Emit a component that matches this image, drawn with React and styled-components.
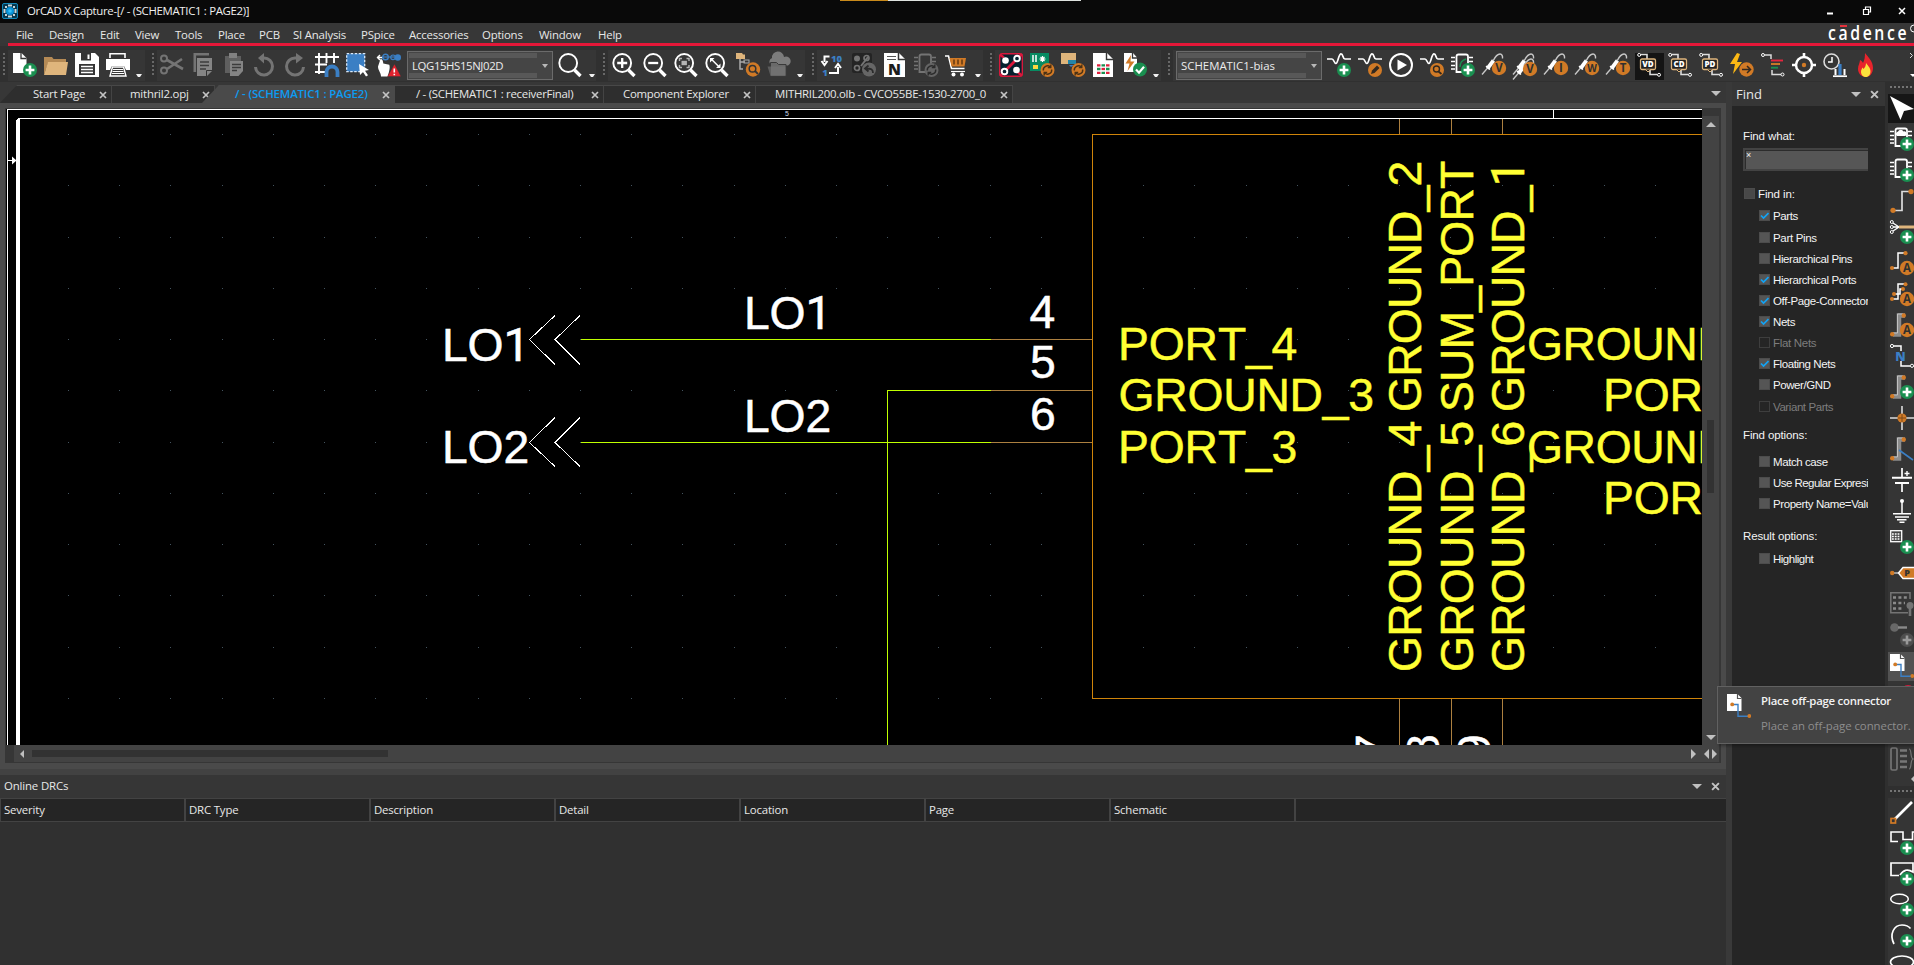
import React from "react";
import styled, { createGlobalStyle, css } from "styled-components";

const UI = '"Open Sans", "Noto Sans", sans-serif';

const Global = createGlobalStyle`
  * { box-sizing: border-box; }
  html, body { margin: 0; padding: 0; background: #252525; overflow: hidden; }
  body { font-family: ${UI}; font-size: 11.4px; color: #e8e8e8; }
  svg { display: block; flex: none; }
`;

const O = "#d17a26";
const G = "#1a8f50";
const B = "#3b7fc4";
const W = "#ffffff";
const D = "#747474";
const T = "#dfb57c";

/* ---------- icon pieces ---------- */
const Plus = ({ c = G, p = W }) => (
  <g>
    <circle cx="17" cy="17" r="7" fill={c} />
    <path d="M17 12.6v8.8M12.6 17h8.8" stroke={p} strokeWidth="2.6" />
  </g>
);
const Letter = ({ l, cx = 17, cy = 15, r = 7.2, s = 11.5 }) => (
  <g>
    <circle cx={cx} cy={cy} r={r} fill={O} />
    <text x={cx} y={cy + s * 0.36} fontSize={s} fontWeight="700" fontFamily="Open Sans, sans-serif" textAnchor="middle" fill="#30302e">{l}</text>
  </g>
);
const Probe = () => (
  <g fill="none" stroke={W}>
    <path d="M0 21.5L6 14.500" stroke="#c8c8c8" strokeWidth="1.3" />
    <path d="M5.5 15.500L11.500 7.500" strokeWidth="3.8" />
    <path d="M4 13l4 3.600" strokeWidth="1.4" />
    <path d="M11 8c2-4 4.500-7 7-7 2 0 2.800 2 2.500 4.500" stroke="#c8c8c8" strokeWidth="1.4" />
  </g>
);
const Lens = ({ children }) => (
  <g>
    <path d="M16.500 17l6 6" stroke={W} strokeWidth="3.4" />
    <ellipse cx="10.200" cy="10" rx="8.900" ry="9" fill="none" stroke={W} strokeWidth="1.9" />
    {children}
  </g>
);
const Wave = () => <path d="M0 6h5c2 0 2 4.500 4 4.500S11.500 0.800 14 0.800 15.500 6 18 6h6" fill="none" stroke={W} strokeWidth="1.7" />;
const Refresh = ({ c = O, k = "#4a3115" }) => (
  <g>
    <circle cx="17.500" cy="17" r="7" fill={c} />
    <path d="M13.300 17.500a4.200 4.200 0 0 1 7-3.600M21.700 16.500a4.200 4.200 0 0 1-7 3.600M20.800 11.600v3h-3M14.200 22.400v-3h3" fill="none" stroke={k} strokeWidth="1.400" />
  </g>
);
const Tag = ({ l }) => (
  <g>
    <path d="M4 1.500h6v5M13 17v4.500h7" fill="none" stroke="#dcdcdc" strokeWidth="1.6" />
    <circle cx="2.200" cy="1.900" r="1.500" fill="none" stroke={W} />
    <circle cx="22" cy="21.800" r="1.500" fill="none" stroke={W} />
    <rect x="3.500" y="6" width="15" height="10.500" rx="1.500" fill="#222" stroke={T} strokeWidth="1.300" />
    <path d="M8.500 16.500l2.500 2.500 2.500-2.500" fill="#222" stroke={T} />
    <text x="11" y="14.200" fontSize="8" fontWeight="800" fontFamily="Open Sans, sans-serif" textAnchor="middle" fill={W}>{l}</text>
  </g>
);
const Doc = ({ children, fold = "#353535" }) => (
  <g>
    <path d="M1 0h9l4 4.500V19H1z" fill={W} />
    <path d="M9.500 0v5h4.500" fill="none" stroke={fold} strokeWidth="1.300" />
    {children}
  </g>
);
const Chip = ({ c = W }) => (
  <g stroke={c} fill="none">
    <path d="M0 4.500h4M0 8.500h4M0 12.500h4M0 16h4M18 4.500h4M18 8.500h4" strokeWidth="1.600" />
    <path d="M12 19H5.500V3.500q0-2 2-2h7.500q2 0 2 2V11" strokeWidth="1.800" />
  </g>
);
const Bus = () => (
  <g>
    <path d="M3 21.500h6V2.500h6" fill="none" stroke="#8c8c8c" strokeWidth="4.500" />
    <path d="M3 20h4.500V1H13" fill="none" stroke="#c0c0c0" strokeWidth="1" />
    <circle cx="2.200" cy="21.300" r="2.200" fill={O} />
    <circle cx="13.800" cy="2.500" r="2.200" fill={O} />
  </g>
);
const OffPage = () => (
  <g>
    <path d="M0 0h10.500l4 4v13H0z" fill={W} />
    <path d="M10.500 0v4.500h4" fill="none" stroke="#555" strokeWidth="1.200" />
    <path d="M5 10.500h6v11.700h11" fill="none" stroke={B} strokeWidth="1.400" />
    <circle cx="5.200" cy="10.400" r="1.900" fill={O} />
    <circle cx="22.300" cy="22" r="1.900" fill={O} />
  </g>
);

const ICONS = {
  newDoc: <g><path d="M0 0h8.500l5 5v15H0z" fill={W} /><path d="M8 0v5.500h5.500" fill="none" stroke="#353535" strokeWidth="1.300" /><Plus /></g>,
  open: <g><path d="M0 22V4h8l1.500 2H22v4H4z" fill="#b58a55" /><path d="M4 9h20l-2 13H0z" fill={T} /></g>,
  save: <g><path d="M0 0h20l4 4v20H0z" fill={W} /><path d="M6 0h10v7.500H6zM4 11h16v11H4z" fill="#353535" /><path d="M12.500 1.500h2v4.500h-2z" fill={W} /><path d="M6 13.500h12M6 16.500h12M6 19.500h12" stroke={W} strokeWidth="1.500" /></g>,
  print: <g><path d="M4 5V0.800h15V5" fill="none" stroke={W} strokeWidth="1.600" /><path d="M0 6h24v11h-4l-2-4H6l-2 4H0z" fill={W} /><path d="M6.500 14h11l2.500 9H4z" fill="#353535" stroke={W} strokeWidth="1.400" /><path d="M7 16.500h10M6.500 18.500h11M6 20.500h12" stroke={W} /></g>,
  cut: <g fill="none" stroke={D} strokeWidth="2"><circle cx="4" cy="5.500" r="3" /><circle cx="4" cy="17.500" r="3" /><path d="M7 7l16 9M7 16L22 6" strokeWidth="2.600" /></g>,
  copy: <g><path d="M5 1.300h13M3.800 19V0" fill="none" stroke={D} strokeWidth="2.600" /><path d="M6 5h15v13l-5 5H6z" fill="#858585" /><path d="M9 9h9M9 12.500h9M9 16h6" stroke="#3c3c3c" strokeWidth="1.400" /><path d="M15.500 23v-5.500H21" stroke="#333" fill="none" /></g>,
  paste: <g><path d="M3 3h16v17H3z" fill="#5f5f5f" /><path d="M7 0h8v5H7z" fill="#808080" /><path d="M8 8h13v10l-4.500 5H8z" fill="#858585" /><path d="M10 11.500h9M10 14.500h9M10 17.500h5" stroke="#3c3c3c" strokeWidth="1.300" /></g>,
  undo: <g fill="none" stroke={D} strokeWidth="3"><path d="M9 5h2a8.500 8.500 0 1 1-8.500 9" /><path d="M11 0L5 5l6 5.500z" fill={D} stroke="none" /></g>,
  redo: <g fill="none" stroke={D} strokeWidth="3"><path d="M13 5h-2a8.500 8.500 0 1 0 8.500 9" /><path d="M12 0l7 5-7 5.500z" fill={D} stroke="none" /></g>,
  snap: <g><path d="M4 0v21M11.500 0v10M19 0v10M0 4h24M0 11.500h12M0 19h10" stroke={W} strokeWidth="1.900" /><path d="M11.500 24v-5a5.500 5.500 0 0 1 11 0v5" fill="none" stroke={B} strokeWidth="3.800" /></g>,
  select: <g><rect x="0.700" y="0.700" width="18" height="18" fill={B} stroke="#d9e8f8" strokeWidth="1.300" strokeDasharray="2.500 1.500" /><path d="M13 11l10 6-4 .8 3 4.500-2 1.300-3-4.500-3 3z" fill={W} /></g>,
  hand: <g><path d="M0 4.500h6M3 2L0.500 4.500 3 7" stroke={W} strokeWidth="1.400" fill="none" /><path d="M5 4h15" stroke={B} strokeWidth="1.200" /><circle cx="8.500" cy="4" r="2.800" fill="none" stroke={B} strokeWidth="1.400" /><circle cx="16" cy="4.300" r="2.300" fill="none" stroke={B} strokeWidth="1.200" /><circle cx="20.800" cy="4.500" r="3.200" fill={B} /><path d="M3.500 6c2 0 2.500 2 2.800 4.500l6 1.200c1 3 0 6-1.500 11.800H4c0-4-3-6-3-10z" fill={W} /><path d="M17.500 11L24 23.500H10.500z" fill="#e0222e" stroke="#353535" strokeWidth=".4" /><path d="M17.300 15.500v4M17.300 20.800v1.500" stroke={W} strokeWidth="1.600" /></g>,
  search: <Lens />,
  zin: <Lens><path d="M10.200 5v10M5.200 10h10" stroke={W} strokeWidth="2.300" /></Lens>,
  zout: <Lens><path d="M5.200 10h10" stroke={W} strokeWidth="2.300" /></Lens>,
  zfit: <Lens><g fill="none" stroke="#b5b5b5" strokeWidth="1.400"><path d="M5.500 8V5.500H8M12.500 5.500H15V8M15 12v2.500h-2.500M8 14.500H5.500V12" /><rect x="7.500" y="7.800" width="5.400" height="4.400" fill="#b5b5b5" stroke="none" /></g></Lens>,
  zarea: <Lens><path d="M6.500 6.300l7.500 7.500" stroke={W} strokeWidth="1.500" /><path d="M5 5h4.500L5 9.500zM15.500 15H11l4.500-4.500z" fill={W} /></Lens>,
  tree: <g><path d="M0 0h6l1 1.500h2V6H0z" fill={T} /><path d="M4 6v10h3M4 9h5" stroke="#aaa" fill="none" strokeWidth="1.500" /><rect x="8" y="7" width="5" height="3" fill="none" stroke="#aaa" /><circle cx="17" cy="16.500" r="7.200" fill={O} /><circle cx="16.500" cy="15.700" r="3.300" fill="none" stroke="#333" strokeWidth="1.500" /><path d="M19 18l3 3" stroke="#333" strokeWidth="1.800" /></g>,
  cloud: <g><path d="M4 12a4 4 0 0 1 1-7 6 6 0 0 1 12-1 4.500 4.500 0 0 1 4 8.500z" fill="#7c7c7c" /><path d="M3.500 23V9.500h6l2 2h7.500v11.500z" fill="#6a6a6a" stroke="#3a3a3a" /><path d="M0.500 13.500h18v9.500H3.500z" fill="#777" opacity=".6" /></g>,
  annot: <g fill="none" stroke={W} strokeWidth="2"><path d="M8.500 3.500H3.500V9M0.500 8l3 4 3-4M8 20h9v-6M14 15l3-4 3 4" /><text x="15.500" y="8.500" fontSize="9.500" fontWeight="800" fontFamily="Open Sans, sans-serif" textAnchor="middle" fill={B} stroke="none">10</text><text x="4" y="23" fontSize="9.500" fontWeight="800" fontFamily="Open Sans, sans-serif" textAnchor="middle" fill={B} stroke="none">1</text></g>,
  pcbBack: <g><rect x="0" y="0" width="20" height="20" rx="2" fill="#242424" /><circle cx="5" cy="5.500" r="3" fill={D} /><circle cx="14.500" cy="5" r="2.500" fill="none" stroke={D} strokeWidth="1.700" /><circle cx="5" cy="15" r="2.500" fill="none" stroke={D} strokeWidth="1.700" /><path d="M9 13L16 4" stroke={D} strokeWidth="2" /><circle cx="17" cy="16.500" r="7" fill="#666" /><path d="M21 20c0-4-2-4.500-7-4.500M16.500 12.500l-3.500 3 3.500 3" stroke="#2a2a2a" strokeWidth="1.800" fill="none" /></g>,
  netlist: <g><path d="M1 0h15l6 6v18H1z" fill={W} /><path d="M15.500 0v6.500H22" fill="none" stroke="#353535" strokeWidth="1.500" /><path d="M4 3.500h9M4 6.500h9" stroke="#555" strokeWidth="1.200" /><text x="11.500" y="21.500" fontSize="15.500" fontWeight="800" fontFamily="Open Sans, sans-serif" textAnchor="middle" fill="#1c1c1c">N</text></g>,
  chipSwap: <g><Chip c={D} /><Refresh c="#646464" k="#2b2b2b" /></g>,
  cart: <g><path d="M0 3h3.500l3 12.500h13" fill="none" stroke={W} strokeWidth="1.600" /><path d="M4.500 5H21l-1.500 8.500H6.500z" fill={O} /><path d="M9 6.500v5M13 6.500v5M17 6.500v5" stroke="#5b3410" strokeWidth="1.400" /><path d="M6 18.500h14" stroke={W} strokeWidth="1.200" /><circle cx="8.500" cy="21.500" r="2" fill={W} /><circle cx="17" cy="21.500" r="2" fill={W} /></g>,
  pcb: <g><rect x="0.700" y="0.700" width="22.600" height="22.600" rx="2.500" fill="#06212f" stroke="#d9183c" strokeWidth="1.400" /><path d="M1 23L23 1M0.800 1.500l4 3M19 19.500l4 3" stroke="#d9183c" strokeWidth="2.800" /><circle cx="6.500" cy="7.500" r="3.300" fill={W} /><circle cx="17.500" cy="17" r="3.300" fill={W} /><circle cx="18" cy="5.500" r="2.800" fill="#06212f" stroke={W} strokeWidth="1.900" /><circle cx="5.500" cy="18.500" r="2.800" fill="#06212f" stroke={W} strokeWidth="1.900" /></g>,
  board: <g><rect width="19" height="18" fill="#078b62" /><path d="M3 2v7M6 2v7" stroke={W} strokeWidth="1.500" /><path d="M12.500 3v6M9.500 6h6M10.500 4l4 4M14.500 4l-4 4" stroke={W} strokeWidth="1.200" /><rect x="3" y="12" width="5" height="4" fill="#f8d840" /><Refresh /></g>,
  folderSync: <g><rect width="15" height="11" fill={T} /><path d="M7 7h8v4H7z" fill="#2385a8" /><path d="M8 12h5l-3 2z" fill={B} /><Refresh /></g>,
  report: <g><path d="M1 0h14l6 6v18H1z" fill={W} /><path d="M14.500 0v6.500H21" fill="none" stroke="#353535" strokeWidth="1.400" /><path d="M5 12.300h3.500M14 12.300h3.500M5 19.800h3.500M14 19.800h3.500" stroke="#e01f3c" strokeWidth="2.300" /><path d="M9.500 12.300H13M9.500 19.800H13M5 16h3.500M14 16h3.500" stroke={G} strokeWidth="2.300" /><path d="M9.500 16H13" stroke="#e01f3c" strokeWidth="2.300" /></g>,
  drc: <g><Doc /><path d="M8 2L2.500 10.500h4l-2 7.500 7-9.500H7.500z" fill={O} /><circle cx="17" cy="16.500" r="7" fill={G} /><path d="M13 16.500l3 3.200 5-6" fill="none" stroke={W} strokeWidth="2.200" /></g>,
  simNew: <g><Wave /><Plus /></g>,
  simEdit: <g><Wave /><circle cx="17" cy="17" r="7" fill={O} /><path d="M13 21l1-3.500 5-5 2.500 2.500-5 5z" fill="#33291f" /></g>,
  play: <g><circle cx="12" cy="12" r="11" fill="none" stroke={W} strokeWidth="2" /><path d="M8.500 6.500L18 12l-9.500 5.500z" fill={W} /></g>,
  simView: <g><Wave /><circle cx="17" cy="17" r="7" fill={O} /><circle cx="16.500" cy="16" r="3" fill="none" stroke="#33291f" strokeWidth="1.400" /><path d="M18.500 18.500l3 2.500" stroke="#33291f" strokeWidth="1.700" /></g>,
  chipPlus: <g><Chip /><path d="M9 14c0-4 2-7 6-8" stroke={G} fill="none" strokeWidth="1.300" /><Plus /></g>,
  pV: <g><Probe /><Letter l="V" /></g>,
  pVV: <g><Probe /><g transform="translate(0 5)"><Probe /></g><Letter l="V" cy={16} /></g>,
  pI: <g><Probe /><Letter l="I" /></g>,
  pW: <g><Probe /><Letter l="W" s={10} /></g>,
  pT: <g><Probe /><Letter l="T" /></g>,
  vd: <Tag l="VD" />, cd: <Tag l="CD" />, pd: <Tag l="PD" />,
  bolt: <g><path d="M7 0L0 11h5l-2 10 9-12H7l3-8z" fill="#fbb814" /><circle cx="16.500" cy="16.500" r="7.200" fill={O} /><path d="M12 16.500h8M17 13l3.500 3.500L17 20" fill="none" stroke="#33291f" strokeWidth="1.500" /></g>,
  levels: <g><path d="M4 2h6v4M11 17v4.500h9" fill="none" stroke="#dcdcdc" strokeWidth="1.500" /><circle cx="2" cy="2" r="1.500" fill="none" stroke={W} /><circle cx="21.500" cy="21.500" r="1.500" fill="none" stroke={W} /><path d="M10 7.500h12" stroke="#e5263f" strokeWidth="1.900" /><path d="M10 11h9" stroke={O} strokeWidth="1.900" /><path d="M10 14.700h7" stroke={G} strokeWidth="1.900" /></g>,
  target: <g><circle cx="12" cy="12" r="8" fill="none" stroke={W} strokeWidth="2.500" /><path d="M12 0v5M12 19v5M0 12h5M19 12h5" stroke={W} strokeWidth="2.600" /><circle cx="12" cy="12" r="2.200" fill={O} /></g>,
  clock: <g><circle cx="8.500" cy="8.500" r="7.500" fill="none" stroke="#dcdcdc" strokeWidth="1.600" /><path d="M9 4v5H5" fill="none" stroke={W} strokeWidth="1.500" /><path d="M10 23.200h14" stroke={W} strokeWidth="1.700" /><path d="M12.500 22v-6M21.500 22v-6" stroke={W} strokeWidth="2" /><path d="M17 22V11" stroke={B} strokeWidth="3.200" /></g>,
  flame: <g><path d="M11 0c3 4 8 8 8 15 0 5-3 9-7 9s-8-3-8-8c0-4 2-6 2-9 2 1 2.500 2 3 3 1.500-3 2-6 2-10z" fill="#e8242c" /><path d="M12 10c2 3 4.500 4.500 4.500 8.500 0 3-2 5.500-4.500 5.500s-5-2-5-5c0-2 1-3.500 1.500-4.500l1 1.500c1.500-1.500 2.500-3.500 2.500-6z" fill="#fbe23c" /></g>,
  arrow: <path d="M0 0l24 13-10 2-3.500 9z" fill={W} />,
  partCloud: <g><Chip /><path d="M7 9a2.500 2.500 0 0 1 1-4.500 3 3 0 0 1 5.500 0A2.300 2.300 0 0 1 15 9z" fill={W} /><Plus /></g>,
  part: <g><Chip /><Plus /></g>,
  wire: <g><path d="M4 21.500h8v-19h8" fill="none" stroke="#dcdcdc" strokeWidth="1.700" /><circle cx="3" cy="21.300" r="2.600" fill={O} /><circle cx="21" cy="2.600" r="2.600" fill={O} /></g>,
  bundle: <g><path d="M3 3l6 4-6 4M3 7h7" stroke={W} fill="none" strokeWidth="1.300" /><g fill="#333" stroke={W}><circle cx="1.800" cy="2" r="1.500" /><circle cx="1.800" cy="7" r="1.500" /><circle cx="1.800" cy="12" r="1.500" /></g><path d="M9 7h15" stroke={T} strokeWidth="3" /><Plus /></g>,
  auto1: <g><path d="M2 17h6V2h7" fill="none" stroke={W} strokeWidth="1.500" /><circle cx="2" cy="17" r="2.100" fill={O} /><circle cx="15.500" cy="2.200" r="2.100" fill={O} /><Letter l="A" cy={17} /></g>,
  auto2: <g><path d="M2 17h6V2h7M4 12h6V7h4" fill="none" stroke={W} strokeWidth="1.500" /><g fill={O}><circle cx="2" cy="17" r="2" /><circle cx="4" cy="12" r="2" /><circle cx="15.500" cy="2.200" r="2" /><circle cx="13" cy="7" r="2" /></g><Letter l="A" cy={17} /></g>,
  auto3: <g><Bus /><Letter l="A" cy={17} /></g>,
  net: <g><path d="M4 2h7v5M11 17v5h9" fill="none" stroke={W} strokeWidth="1.500" /><circle cx="2" cy="2" r="1.600" fill="none" stroke={W} /><circle cx="22" cy="21.800" r="1.600" fill="none" stroke={W} /><text x="10.500" y="16.500" fontSize="12.500" fontWeight="800" fontFamily="Open Sans, sans-serif" textAnchor="middle" fill={B}>N</text></g>,
  busPlus: <g><Bus /><Plus /></g>,
  junction: <g><path d="M12 0v24M0 12h24" stroke="#dcdcdc" strokeWidth="1.600" /><circle cx="12" cy="12" r="4.600" fill={O} /><path d="M12 8v8M8 12h8" stroke="#7a4818" strokeWidth="1" /></g>,
  busEntry: <g><Bus /><path d="M9 13l14 10" stroke={B} strokeWidth="1.600" /></g>,
  power: <g stroke={W} fill="none"><path d="M12 0v9M12 15v9" strokeWidth="1.700" /><path d="M2 9.700h20M5 15h14" strokeWidth="1.900" /><path d="M17 3v5M14.500 5.500h5" strokeWidth="1.400" /></g>,
  ground: <g stroke={W} fill="none"><circle cx="12" cy="2" r="2" fill={W} stroke="none" /><path d="M12 2v12" strokeWidth="1.500" /><path d="M3 14.800h18M5 18h14M7 20.800h9.500M9.500 23.300h5" strokeWidth="1.500" /></g>,
  gridPlus: <g><rect x="0.700" y="0.700" width="11" height="11" fill="#444" stroke={W} strokeWidth="1.300" /><path d="M2 4h8.500M2 6.500h8.500M2 9h8.500" stroke={W} strokeWidth="1.300" strokeDasharray="1.800 1" /><Plus /></g>,
  port: <g><path d="M2 12h6" stroke={W} /><circle cx="2.200" cy="12" r="2.200" fill={O} /><path d="M13 6.500h12v11H13L8.500 12z" fill={O} stroke={W} strokeWidth="1.500" /><text x="17" y="15.300" fontSize="9" fontWeight="800" fontFamily="Open Sans, sans-serif" textAnchor="middle" fill="#333">P</text></g>,
  hier: <g stroke={D} fill="none"><path d="M20 7V0.800H0.800v20H18" strokeWidth="1.500" /><path d="M3 5.500h15M3 11h12M3 16.500h9" strokeWidth="2.400" strokeDasharray="3 2.400" stroke="#8a8a8a" /><circle cx="20" cy="13.500" r="3.500" fill={D} stroke="none" /><path d="M20 15v9" strokeWidth="2.600" /></g>,
  pinPlus: <g><circle cx="4.500" cy="4.500" r="4.300" fill="#686868" /><path d="M8 4.500h9" stroke="#8a8a8a" strokeWidth="2.400" /><Plus c="#4e4e4e" p="#9a9a9a" /></g>,
  off: <OffPage />,
  stop: <g><circle cx="18" cy="7" r="7" fill="#d9183c" /></g>,
  blank: <g />,
  list: <g stroke={D} fill="none"><rect x="1" y="1" width="6" height="22" rx="1.500" strokeWidth="1.700" /><path d="M10 3.500h7M10 9h7M10 14.500h7M10 20h7" strokeWidth="2.600" stroke="#777" /><path d="M19 2c3 0 1 9 4 10-3 1-1 10-4 10" strokeWidth="1.200" /></g>,
  line: <g><path d="M5 19L22 2" stroke={W} strokeWidth="2.600" /><rect x="1" y="18.500" width="4.500" height="4.500" fill="#333" stroke={O} strokeWidth="1.700" /></g>,
  poly: <g><path d="M8 10.500H1V1h12v7.500h9.500V1H25" fill="none" stroke={W} strokeWidth="1.600" /><Plus /></g>,
  polyArc: <g><path d="M9 13.500H1V1h22v9c-5-3-9-3-13 3" fill="none" stroke={W} strokeWidth="1.700" /><Plus /></g>,
  ellipse: <g><ellipse cx="9.500" cy="6" rx="8.800" ry="4.800" fill="none" stroke={W} strokeWidth="1.500" /><Plus /></g>,
  arc: <g><path d="M4 20C-1 10 4 1 12 1c4 0 6.500 1 8.500 3.500" fill="none" stroke={W} strokeWidth="1.700" /><Plus /></g>,
  ell2: <g><ellipse cx="12" cy="7" rx="11.500" ry="6" fill="none" stroke={W} strokeWidth="1.600" /></g>,
};
const Icon = ({ n }) => <svg width="24" height="24" viewBox="0 0 24 24" overflow="visible">{ICONS[n]}</svg>;

/* ---------- frame ---------- */
const Shell = styled.div`
  width: 1914px; height: 965px; overflow: hidden; position: relative;
  display: flex; flex-direction: column; background: #363636;
`;
const TitleBar = styled.div`
  height: 23px; flex: none; background: #090909; display: flex; align-items: center;
  padding: 0 7px 2px 2px; gap: 9px; line-height: 16px; color: #f0f0f0; letter-spacing: -0.32px;
`;
const WinButtons = styled.div`margin-left: auto;`;
const Progress = styled.div`
  position: absolute; top: 0; left: 840px; width: 241px; height: 1px;
  background: linear-gradient(90deg, #c98a1b 48px, #dfe3e0 48px);
`;
const MenuBar = styled.div`
  height: 20px; flex: none; background: #373737; display: flex; padding-left: 16px; line-height: 24px;
  overflow: hidden;
`;
const MenuItem = styled.div`width: ${(p) => p.$w}px; flex: none; white-space: nowrap; letter-spacing: -0.2px;`;
const Logo = styled.div`margin-left: auto;`;
const RedLine = styled.div`height: 3px; flex: none; margin-left: 8px; background: #e41738;`;

const ToolBar = styled.div`height: 36px; flex: none; background: #303030; display: flex; padding-top: 4px;`;
const Group = styled.div`
  width: ${(p) => p.$w}px; flex: none; height: 31px; display: flex; align-items: flex-start;
  padding: 3px 0 0 ${(p) => p.$pl || 12}px; gap: 7px;
  background: linear-gradient(90deg, #303030 8px, #363636 8px, #363636 calc(100% - 4px), #303030 calc(100% - 4px));
  position: relative; overflow: hidden;
  &::before {
    content: ""; position: absolute; left: 3px; top: 3px; width: 2px; height: 22px;
    background: repeating-linear-gradient(#686868 0 2px, transparent 2px 4px);
  }
`;
const Combo = styled.div`
  width: 146px; height: 29px; margin: -2px -2px 0 -1px; flex: none; background: #454545;
  border: 1px solid #6b6b6b; padding: 1px 15px 1px 1px; display: flex; position: relative; color: #ececec;
  &::after {
    content: ""; position: absolute; right: 4px; top: 12px;
    border: 3px solid transparent; border-top: 4px solid #b8b8b8; border-bottom: 0;
  }
`;
const ComboText = styled.div`
  flex: 1; line-height: 15px; padding-left: 3px; border-top: 5px solid #585858; border-bottom: 5px solid #585858;
  white-space: nowrap; letter-spacing: ${(p) => p.$ls || 0}px; background: #454545;
`;
const Drop = styled.div`
  width: 6px; margin: 21px 0 0 ${(p) => p.$ml || 0}px; flex: none; border: 2.500px solid transparent; border-top: 3px solid #f0f0f0; border-bottom: 0;
`;
const Pressed = styled.div`
  width: 29px; height: 27px; margin: 0 -3px 0 -2px; padding: 0 2px; background: #141414; flex: none;
`;

const Body = styled.div`flex: 1; display: flex; min-height: 0;`;
const Left = styled.div`width: 1726px; flex: none; display: flex; flex-direction: column;`;

const TabBar = styled.div`height: 21px; flex: none; background: #373737; display: flex; padding-top: 3px;`;
const TabShape = styled.div`
  width: ${(p) => p.$w}px; height: 18px; flex: none; margin-left: ${(p) => p.$ml || 0}px; position: relative;
  background: ${(p) => (p.$on ? "#4a4a4a" : "#2e2e2e")}; display: flex; align-items: center;
  padding-left: ${(p) => p.$pl}px; padding-right: 4px; justify-content: space-between;
  line-height: 16px; white-space: nowrap; border-top: 1px solid #484848; border-right: 1px solid #444;
  letter-spacing: ${(p) => p.$ls || -0.26}px;
  ${(p) => p.$slant && css`clip-path: polygon(17px 0, 100% 0, 100% 100%, 0 100%);`}
  ${(p) => p.$on && css`color: #0c9cf2; font-weight: 600; border-color: #4a4a4a;`}
`;
const TabText = styled.span`padding-bottom: 1px;`;
const Cross = ({ s = 8, c = "#c4c4c4" }) => (
  <svg width={s} height={s} viewBox="0 0 8 8"><path d="M1 1l6 6M7 1L1 7" stroke={c} strokeWidth="1.700" /></svg>
);
const Down = styled.div`
  width: 10px; height: 5px; border: 5px solid transparent; border-top: 5px solid #c0c0c0; border-bottom: 0;
`;
const TabMenu = styled.div`margin-left: auto; padding: 6px 5px 0 0;`;

const Editor = styled.div`
  height: 666px; flex: none; background: #363636; border: solid #4a4a4a; border-width: 5px 5px 6px 5px;
  display: grid; grid-template-columns: 1697px 17px 2px; grid-template-rows: 636px 17px 1px; padding: 1px 0 0 0;
`;
const Canvas = styled.div`background: #000; overflow: hidden; margin-left: 1px;`;
const VScroll = styled.div`
  background: #434343; margin-top: 7px; display: flex; flex-direction: column; align-items: center; padding: 6px 0 5px;
`;
const VThumb = styled.div`width: 7px; height: 73px; background: #323232; margin: 293px 0 auto;`;
const HScroll = styled.div`
  background: #434343; margin-left: 9px; display: flex; align-items: center; padding: 0 6px 0 6px;
`;
const HThumb = styled.div`width: 356px; height: 7px; background: #323232; margin: 0 auto 0 8px;`;
const Corner = styled.div`background: #434343; display: flex; align-items: center; justify-content: center; gap: 3px;`;
const Tri = styled.div`
  border: ${(p) => p.$s || 5}px solid transparent;
  ${(p) => p.$d === "l" && css`border-right-color: #c0c0c0; border-left: 0;`}
  ${(p) => p.$d === "r" && css`border-left-color: #c0c0c0; border-right: 0;`}
  ${(p) => p.$d === "u" && css`border-bottom-color: #c0c0c0; border-top: 0;`}
  ${(p) => p.$d === "d" && css`border-top-color: #c0c0c0; border-bottom: 0;`}
`;

const DrcTitle = styled.div`
  height: 29px; flex: none; border-top: 6px solid #424242; background: #363636; line-height: 20px; padding: 0 6px 1px 4px;
  display: flex; align-items: center; letter-spacing: -0.15px;
`;
const PanelButtons = styled.div`margin-left: auto; display: flex; align-items: center; gap: 9px;`;
const DrcHead = styled.div`
  height: 24px; flex: none; display: flex; background: #252525; border: solid #434343; border-width: 1px 0;
`;
const DrcCell = styled.div`
  width: 185px; flex: none; border-right: 2px solid #434343; padding-left: 3px; line-height: 22px; letter-spacing: -0.17px;
  &:first-child { border-left: 1px solid #434343; width: 186px; }
`;
const DrcBody = styled.div`flex: 1; background: #303030;`;

const FindPanel = styled.div`
  width: 159px; flex: none; border-left: 6px solid #393939; background: #252525; display: flex; flex-direction: column;
`;
const FindTitle = styled.div`
  height: 24px; flex: none; background: #363636; font-size: 13px; line-height: 24px; padding: 0 6px 0 4px; display: flex; align-items: center;
`;
const FindForm = styled.div`
  width: 136px; overflow: hidden; padding: 22px 0 0 11px; font-family: "Liberation Sans", Arial, sans-serif; font-size: 11.5px;
  letter-spacing: -0.42px; color: #f4f4f4; display: flex; flex-direction: column;
`;
const Caption = styled.div`
  line-height: 16px; height: 16px; margin-top: ${(p) => p.$mt || 0}px; white-space: nowrap; letter-spacing: -0.12px;
`;
const FindInput = styled.div`
  height: 23px; margin-top: 4px; flex: none; border: 2px solid #434343; border-right: 0; background: #565656;
  box-shadow: inset 1px 1px 0 #2c2c2c; font-size: 9px; line-height: 8px; padding: 1px 1px;
`;
const Row = styled.label`
  height: 21px; margin-top: ${(p) => p.$mt || 0}px; margin-left: ${(p) => (p.$top ? 1 : 16)}px; flex: none;
  display: flex; align-items: center; gap: 3px; white-space: nowrap; color: ${(p) => (p.$off ? "#7d7d7d" : "#f4f4f4")};
  letter-spacing: ${(p) => (p.$ls ? `${p.$ls}px` : p.$top ? "-0.12px" : "inherit")};
`;
const Box = styled.span`
  width: 11px; height: 11px; flex: none; display: block;
  background: ${(p) => (p.$off ? "transparent" : p.$top ? "#484848" : "#555")}; border: 1px solid ${(p) => (p.$off ? "#3e3e3e" : "#4c4c4c")};
`;
const Check = ({ label, on, off, top, mt, ls }) => (
  <Row $mt={mt} $off={off} $top={top} $ls={ls}>
    <Box $off={off} $top={top}>
      {on && <svg width="9" height="9" viewBox="0 0 9 9"><path d="M1 4.500l2.500 2.500 5-5" fill="none" stroke="#12a3f5" strokeWidth="1.700" /></svg>}
    </Box>
    {label}
  </Row>
);

const SideBar = styled.div`
  flex: 1; background: #353535; border-left: 3px solid #2f2f2f; overflow: hidden; display: flex; flex-direction: column;
`;
const SideHandle = styled.div`
  height: 12px; flex: none; padding: 4px 0 0 2px; background: #2f2f2f;
  &::before { content: ""; display: block; height: 2px; background: repeating-linear-gradient(90deg, #757575 0 2px, transparent 2px 4px); }
`;
const SideItem = styled.div`
  height: 29px; margin-bottom: 2px; flex: none; padding: 2px 0 0 2px; background: ${(p) => p.$bg || "transparent"}; overflow: hidden;
`;
const SideMore = styled.div`height: 10px; flex: none; padding-left: 3px;`;

const Tooltip = styled.div`
  position: absolute; left: 1717px; top: 686px; width: 200px; height: 58px; background: #434343; border: 1px solid #616161;
  display: flex; padding: 7px 0 0 9px; gap: 10px; box-shadow: 2px 2px 3px rgba(0,0,0,.35); white-space: nowrap;
`;
const TipBody = styled.div`margin-top: -1px;`;
const TipTitle = styled.div`font-weight: 600; line-height: 16px; color: #f2f2f2; letter-spacing: -0.25px;`;
const TipText = styled.div`line-height: 16px; margin-top: 9px; color: #8e8e8e; letter-spacing: -0.04px; font-size: 11.4px;`;

/* ---------- schematic ---------- */
const GX = (k) => Math.round(68 + k * 51.2);
const GY = (k) => Math.round(134 + k * 51.27);
const Dots = () => {
  const out = [];
  for (let i = 0; i < 32; i++) for (let j = 0; j < 12; j++) out.push(<rect key={i + "-" + j} x={GX(i)} y={GY(j)} width="1" height="1" />);
  return <g fill="#44545f">{out}</g>;
};
/* The digit 1 is set in Roboto, whose 1 has no foot. */
const digits = (s) =>
  s.split(/(1)/).map((part, i) => (part === "1" ? <tspan key={i} fontFamily="Roboto" fontSize="46.600">1</tspan> : part));
const H = ({ x, y, c = "#ffff33", ls = -0.15, children }) => (
  <text x={x} y={y} fill={c} stroke={c} letterSpacing={ls}>{digits(children)}</text>
);
const V = ({ x, y, c = "#ffff33", ls = -0.85, children }) => (
  <text transform={`translate(${x} ${y}) rotate(-90)`} fill={c} stroke={c} letterSpacing={ls}>{digits(children)}</text>
);
const Drawing = styled.svg`
  font-family: "Liberation Sans", Arial, sans-serif; font-size: 46.3px; font-kerning: none;
  text { stroke-width: 0.5px; }
`;
const Schematic = () => (
  <Drawing width="1696" height="636" viewBox="6 109 1696 636">
    <Dots />
    <g shapeRendering="crispEdges" fill="none" strokeWidth="1">
      <path d="M7.500 746V109.500H1702M19 118.500H1702M1553.500 109v9M8 160.500h5" stroke="#fff" />
      <path d="M16 121l2-3h2v628h-4z" fill="#fff" />
      <path d="M1702 134.500H1092.500V698.500H1702" stroke="#cf840a" />
      <path d="M1399.500 119v15M1451.500 119v15M1502.500 119v15M1399.500 699v47M1451.500 699v47M1502.500 699v47M991 339.500h101M991 390.500h101M991 442.500h101" stroke="#ad8040" />
      <path d="M581 339.500H991M581 442.500H991M887.500 746V390.500H991" stroke="#bfff00" />
      <path d="M555 315.500l-25.500 24 25.500 25M580 315.500l-25 24 25 25M555 417.500l-25.500 25 25.500 24M580 417.500l-25 25 25 24" stroke="#fff" />
    </g>
    <path d="M12 156.500l4.500 4-4.500 4z" fill="#fff" />
    <text x="785" y="116" fontSize="7" fill="#c8d8ea">5</text>
    <H x={442} y={361} c="#fff">LO1</H>
    <H x={442} y={463} c="#fff">LO2</H>
    <H x={744} y={329} c="#fff">LO1</H>
    <H x={744} y={432} c="#fff">LO2</H>
    <H x={1029.5} y={328} c="#fff">4</H>
    <H x={1030} y={378} c="#fff">5</H>
    <H x={1030} y={430} c="#fff">6</H>
    <H x={1118} y={360}>PORT_4</H>
    <H x={1118.5} y={411} ls={-0.25}>GROUND_3</H>
    <H x={1118} y={463}>PORT_3</H>
    <V x={1420.5} y={412}>GROUND_2</V>
    <V x={1472.5} y={412}>SUM_PORT</V>
    <V x={1523.5} y={412}>GROUND_1</V>
    <V x={1420.5} y={672}>GROUND_4</V>
    <V x={1472.5} y={672}>GROUND_5</V>
    <V x={1523.5} y={672}>GROUND_6</V>
    <H x={1527} y={360} ls={-0.4}>GROUND_8</H>
    <H x={1603} y={411}>PORT_1</H>
    <H x={1527} y={463} ls={-0.4}>GROUND_7</H>
    <H x={1603} y={514}>PORT_2</H>
    <V x={1388} y={760} c="#fff">7</V>
    <V x={1439} y={760} c="#fff">8</V>
    <V x={1490} y={760} c="#fff">9</V>
  </Drawing>
);

const MENU = [["File", 33], ["Design", 51], ["Edit", 35], ["View", 40], ["Tools", 43], ["Place", 41], ["PCB", 34], ["SI Analysis", 68], ["PSpice", 48], ["Accessories", 73], ["Options", 57], ["Window", 59], ["Help", 30]];
const SIDE = ["arrow", "partCloud", "part", "wire", "bundle", "auto1", "auto2", "auto3", "net", "busPlus", "junction", "busEntry", "power", "ground", "gridPlus", "port", "hier", "pinPlus", "off", "stop", "blank", "list"];
const SIDE2 = ["line", "poly", "polyArc", "ellipse", "arc", "ell2"];
const icons = (s) => s.split(" ").map((n) => <Icon key={n} n={n} />);
const Tab = ({ children, ...rest }) => <TabShape {...rest}><TabText>{children}</TabText><Cross /></TabShape>;

export default function App() {
  return (
    <Shell>
      <Global />
      <TitleBar>
        <svg width="16" height="16" viewBox="0 0 16 16">
          <rect x="0.500" y="0.500" width="15" height="15" rx="1.500" fill="#06384f" stroke="#1287b8" />
          <path d="M6 1.500h4v2H6zM6 12.500h4v2H6zM1.500 6h2v4h-2zM12.500 6h2v4h-2zM3 3h2v2H3zM11 3h2v2h-2zM3 11h2v2H3zM11 11h2v2h-2z" fill="#c6d6dc" />
          <circle cx="8" cy="8" r="4" fill="#0a93d8" /><circle cx="8" cy="8" r="1.800" fill="#35c0f5" />
        </svg>
        OrCAD X Capture-[/ - (SCHEMATIC1 : PAGE2)]
        <WinButtons>
          <svg width="80" height="14" viewBox="0 0 80 14" fill="none" stroke="#fff">
            <path d="M0 9.500h6" strokeWidth="2" />
            <path d="M36.500 5.500h5v5h-5zM38.500 5.500v-2.500h5v5H41.500" strokeWidth="1.200" />
            <path d="M72 4l6 6M78 4l-6 6" strokeWidth="1.500" />
          </svg>
        </WinButtons>
      </TitleBar>
      <Progress />
      <MenuBar>
        {MENU.map(([t, w]) => <MenuItem key={t} $w={w}>{t}</MenuItem>)}
        <Logo>
          <svg width="88" height="20" viewBox="0 0 88 20">
            <text transform="translate(2 16.800) scale(.77 1)" fontSize="20.500" fontWeight="600" fontFamily="Open Sans, sans-serif" fill="#fff" letterSpacing="3.400">cadence</text>
            <rect x="14" y="2" width="7" height="2" fill="#e5323c" />
            <circle cx="88" cy="5.500" r="3.500" fill="none" stroke="#fff" strokeWidth="1" />
          </svg>
        </Logo>
      </MenuBar>
      <RedLine />
      <ToolBar>
        <Group $w={149} $pl={13}>{icons("newDoc open save print")}<Drop $ml={-1} /></Group>
        <Group $w={451} $pl={11}>
          {icons("cut copy paste undo redo snap select hand")}
          <Combo><ComboText $ls={-0.4}>LQG15HS15NJ02D</ComboText></Combo>
          <Icon n="search" /><Drop />
        </Group>
        <Group $w={209}>{icons("zin zout zfit zarea tree cloud")}<Drop $ml={-1} /></Group>
        <Group $w={178}>{icons("annot pcbBack netlist chipSwap cart")}<Drop $ml={-1} /></Group>
        <Group $w={178}>{icons("pcb board folderSync report drc")}<Drop $ml={-1} /></Group>
        <Group $w={749} $pl={12}>
          <Combo><ComboText>SCHEMATIC1-bias</ComboText></Combo>
          {icons("simNew simEdit play simView chipPlus pV pVV pI pW pT")}
          <Pressed><Icon n="vd" /></Pressed>
          {icons("cd pd bolt levels target clock flame")}
          <svg width="24" height="24" viewBox="0 0 24 24" overflow="visible"><g transform="translate(25 0)"><path d="M0 0l2.500 2.500L0 5M4 0l2.500 2.500L4 5" stroke="#ddd" fill="none" /><path d="M0 21h6l-3 3z" fill="#fff" /></g></svg>
        </Group>
      </ToolBar>
      <Body>
        <Left>
          <TabBar>
            <Tab $w={112} $pl={33} $slant $ls={-0.2}>Start Page</Tab>
            <Tab $w={103} $pl={18} $ls={-0.2}>mithril2.opj</Tab>
            <Tab $w={193} $ml={-13} $pl={33} $slant $on $ls={-0.14}>/ - (SCHEMATIC1 : PAGE2)</Tab>
            <Tab $w={209} $pl={21}>/ - (SCHEMATIC1 : receiverFinal)</Tab>
            <Tab $w={152} $pl={19}>Component Explorer</Tab>
            <Tab $w={257} $pl={19}>MITHRIL200.olb - CVCO55BE-1530-2700_0</Tab>
            <TabMenu><Down /></TabMenu>
          </TabBar>
          <Editor>
            <Canvas><Schematic /></Canvas>
            <VScroll><Tri $d="u" /><VThumb /><Tri $d="d" /></VScroll>
            <span />
            <HScroll><Tri $d="l" $s={4.5} /><HThumb /><Tri $d="r" $s={5} /></HScroll>
            <Corner><Tri $d="l" $s={5} /><Tri $d="r" $s={5} /></Corner>
          </Editor>
          <DrcTitle>Online DRCs<PanelButtons><Down /><Cross s={9} /></PanelButtons></DrcTitle>
          <DrcHead>
            {["Severity", "DRC Type", "Description", "Detail", "Location", "Page", "Schematic"].map((t) => <DrcCell key={t}>{t}</DrcCell>)}
          </DrcHead>
          <DrcBody />
        </Left>
        <FindPanel>
          <FindTitle>Find<PanelButtons><Down /><Cross s={9} /></PanelButtons></FindTitle>
          <FindForm>
            <Caption>Find what:</Caption>
            <FindInput>×</FindInput>
            <Check label="Find in:" top mt={12} />
            <Check label="Parts" on mt={1} />
            <Check label="Part Pins" mt={1} ls={-0.32} />
            <Check label="Hierarchical Pins" />
            <Check label="Hierarchical Ports" on />
            <Check label="Off-Page-Connectors" on ls={-0.38} />
            <Check label="Nets" on />
            <Check label="Flat Nets" off ls={-0.3} />
            <Check label="Floating Nets" on />
            <Check label="Power/GND" />
            <Check label="Variant Parts" off mt={1} />
            <Caption $mt={10}>Find options:</Caption>
            <Check label="Match case" mt={8} />
            <Check label="Use Regular Expresion" ls={-0.54} />
            <Check label="Property Name=Value" />
            <Caption $mt={14}>Result options:</Caption>
            <Check label="Highlight" mt={4} ls={-0.5} />
          </FindForm>
        </FindPanel>
        <SideBar>
          <SideHandle />
          {SIDE.map((n) => <SideItem key={n} $bg={n === "arrow" ? "#161616" : n === "off" ? "#525252" : null}><Icon n={n} /></SideItem>)}
          <SideMore><Tri $d="l" $s={3} /></SideMore>
          <SideHandle />
          {SIDE2.map((n) => <SideItem key={n}><Icon n={n} /></SideItem>)}
        </SideBar>
      </Body>
      <Tooltip>
        <svg width="24" height="24" viewBox="0 0 24 24"><OffPage /></svg>
        <TipBody><TipTitle>Place off-page connector</TipTitle><TipText>Place an off-page connector.</TipText></TipBody>
      </Tooltip>
    </Shell>
  );
}
